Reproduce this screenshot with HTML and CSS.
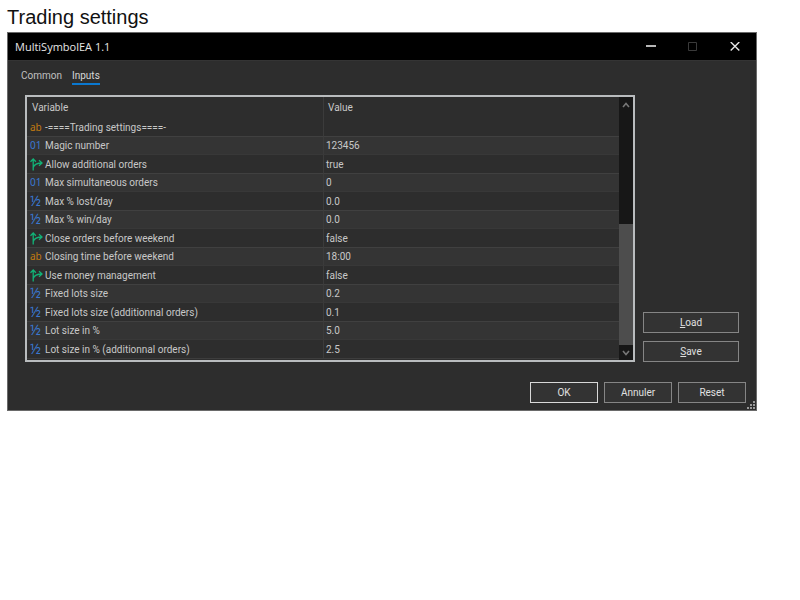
FILE: index.html
```html
<!DOCTYPE html>
<html lang="en">
  <head>
    <meta charset="UTF-8">
    <title>Trading settings</title>
    <link rel="stylesheet" href="styles.css">
  </head>
  <body>
    <svg class="defs" aria-hidden="true">
      <symbol id="branch" viewBox="0 0 13 13">
        <path d="M3.2 12.5V1M0.5 3.8L3.2 1L5.9 3.8M3.2 9.5C4.2 6.5 6.2 5 12 5M9 2.3L12 5L9 7.7"/>
      </symbol>
    </svg>
    <h1>Trading settings</h1>
    <div class="window">
      <div class="titlebar">
        <span class="title">MultiSymbolEA 1.1</span>
        <button class="control" aria-label="Minimize"><svg viewBox="0 0 10 10"><path d="M0 4H10" stroke-width="1.6"/></svg></button>
        <button class="control" aria-label="Maximize" disabled><svg viewBox="0 0 10 10"><path d="M0.5 0.5H8.5V8.5H0.5Z"/></svg></button>
        <button class="control" aria-label="Close"><svg viewBox="0 0 10 10"><path d="M0.7 0L9.3 8.6M9.3 0L0.7 8.6" stroke-width="1.4"/></svg></button>
      </div>

      <div class="tabs">
        <a href="#common">Common</a>
        <a href="#inputs" class="active">Inputs</a>
      </div>

      <div class="main">
        <div class="list">
          <table>
            <thead>
              <tr><th>Variable</th><th>Value</th></tr>
            </thead>
            <tbody>
              <tr><td><span class="icon text">ab</span>-====Trading settings====-</td><td></td></tr>
              <tr><td><span class="icon int">01</span>Magic number</td><td>123456</td></tr>
              <tr><td><svg class="icon bool"><use href="#branch"/></svg>Allow additional orders</td><td>true</td></tr>
              <tr><td><span class="icon int">01</span>Max simultaneous orders</td><td>0</td></tr>
              <tr><td><span class="icon real">½</span>Max % lost/day</td><td>0.0</td></tr>
              <tr><td><span class="icon real">½</span>Max % win/day</td><td>0.0</td></tr>
              <tr><td><svg class="icon bool"><use href="#branch"/></svg>Close orders before weekend</td><td>false</td></tr>
              <tr><td><span class="icon text">ab</span>Closing time before weekend</td><td>18:00</td></tr>
              <tr><td><svg class="icon bool"><use href="#branch"/></svg>Use money management</td><td>false</td></tr>
              <tr><td><span class="icon real">½</span>Fixed lots size</td><td>0.2</td></tr>
              <tr><td><span class="icon real">½</span>Fixed lots size (additionnal orders)</td><td>0.1</td></tr>
              <tr><td><span class="icon real">½</span>Lot size in %</td><td>5.0</td></tr>
              <tr><td><span class="icon real">½</span>Lot size in % (additionnal orders)</td><td>2.5</td></tr>
            </tbody>
          </table>
          <div class="scrollbar">
            <button class="arrow" aria-label="Scroll up"><svg viewBox="0 0 8 6"><path d="M1 5L4 1.5L7 5"/></svg></button>
            <div class="track"><div class="thumb"></div></div>
            <button class="arrow" aria-label="Scroll down"><svg viewBox="0 0 8 6"><path d="M1 1L4 4.5L7 1"/></svg></button>
          </div>
        </div>
        <div class="side">
          <button class="btn"><u>L</u>oad</button>
          <button class="btn"><u>S</u>ave</button>
        </div>
      </div>

      <div class="footer">
        <button class="btn default">OK</button>
        <button class="btn">Annuler</button>
        <button class="btn">Reset</button>
        <svg class="grip" viewBox="0 0 8 8"><path d="M6 0h2v2H6zM3 3h2v2H3zM6 3h2v2H6zM0 6h2v2H0zM3 6h2v2H3zM6 6h2v2H6z"/></svg>
      </div>
    </div>
  </body>
</html>
```

FILE: styles.css
```css
* {
  box-sizing: border-box;
}

body {
  margin: 0;
  padding: 6px 43px 0 7px;
  background: #fff;
  font-family: "Liberation Sans", Arial, sans-serif;
}

h1 {
  margin: 0 0 3px;
  font-size: 20px;
  font-weight: normal;
  line-height: 23px;
  color: #111;
}

.defs {
  position: absolute;
  width: 0;
  height: 0;
}

svg {
  fill: none;
  stroke: currentColor;
}

button {
  font: inherit;
  color: inherit;
  padding: 0;
  border: none;
  background: none;
}

/* Dialog */
.window {
  background: #2d2d2d;
  border: 1px solid #6a6a6a;
  color: #c8c8c8;
  font-family: Roboto, "Noto Sans", sans-serif;
  font-size: 10px;
}

.titlebar {
  display: flex;
  align-items: center;
  height: 27px;
  padding-left: 7px;
  background: #000;
  color: #e6e6e6;
}

.title {
  flex: 1;
  font-family: "Open Sans", "Noto Sans", sans-serif;
  font-size: 11px;
}

.control {
  display: flex;
  align-items: center;
  justify-content: center;
  width: 42px;
  height: 27px;
}

.control svg {
  width: 10px;
  height: 10px;
}

.control:disabled {
  color: #3a3a3a;
}

.tabs {
  display: flex;
  gap: 10px;
  padding: 7px 13px 10px;
  border-top: 1px solid #343434;
}

.tabs a {
  height: 17px;
  line-height: 15px;
  color: #c0c0c0;
  text-decoration: none;
}

.tabs a.active {
  color: #d8d8d8;
  border-bottom: 2px solid #0a78d0;
}

.main {
  display: flex;
  gap: 8px;
  padding: 0 17px;
}

/* Inputs table */
.list {
  display: flex;
  flex: 1;
  border: 2px solid #b9bcbe;
}

table {
  width: 100%;
  table-layout: fixed;
  border-collapse: separate;
  border-spacing: 0;
  margin-bottom: 1px;
  border-bottom: 1px solid #3d3d3d;
}

th, td {
  height: 18px;
  padding: 0 3px;
  line-height: 17px;
  font-weight: normal;
  text-align: left;
  white-space: nowrap;
}

th {
  height: 21px;
  padding: 0 5px;
}

th + th, td + td {
  padding-left: 2px;
  border-left: 1px solid #3b3b3b;
}

th + th {
  padding-left: 4px;
}

tr:nth-child(even) td {
  height: 19px;
  background: #343434;
  border-top: 1px solid #404040;
  border-bottom: 1px solid #383838;
}

.icon {
  display: inline-block;
  width: 13px;
  height: 17px;
  margin-right: 2px;
  font-family: "Noto Sans", sans-serif;
  vertical-align: top;
}

.icon.text {
  color: #c27a10;
}

.icon.int {
  color: #3a78d0;
}

.icon.real {
  color: #3a78d0;
  font-size: 14px;
  line-height: 15px;
}

.icon.bool {
  color: #12b277;
  height: 13px;
  margin-top: 2px;
  stroke-width: 1.3;
}

/* Scrollbar */
.scrollbar {
  display: flex;
  flex: none;
  flex-direction: column;
  width: 14px;
  background: #171717;
  color: #777;
}

.arrow {
  height: 15px;
  line-height: 0;
}

.arrow svg {
  width: 8px;
  height: 6px;
  stroke-width: 1.6;
}

.track {
  display: flex;
  flex: 1;
  flex-direction: column;
  justify-content: flex-end;
}

.thumb {
  height: 52%;
  background: #4d4d4d;
}

/* Buttons */
.side {
  display: flex;
  flex-direction: column;
  justify-content: flex-end;
  gap: 8px;
  width: 96px;
}

.btn {
  height: 21px;
  line-height: 19px;
  background: #333;
  border: 1px solid #858585;
  color: #e0e0e0;
}

.btn.default {
  border-color: #d8d8d8;
}

.footer {
  position: relative;
  display: flex;
  justify-content: flex-end;
  gap: 6px;
  padding: 20px 10px 7px;
}

.footer .btn {
  width: 68px;
}

.grip {
  position: absolute;
  right: 1px;
  bottom: 1px;
  width: 8px;
  height: 8px;
  fill: #999;
  stroke: none;
}
```
